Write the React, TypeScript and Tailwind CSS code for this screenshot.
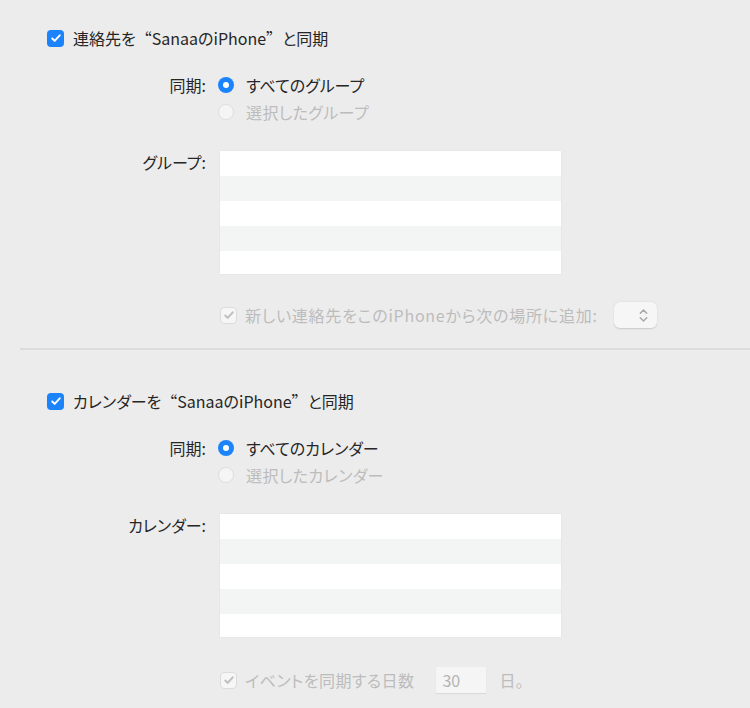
import { ReactNode } from 'react';

const font = "font-['Noto_Sans_CJK_JP','Noto_Sans',sans-serif] [font-feature-settings:'palt']";

function Q({ c }: { c: string }) {
  // full-width quotation marks, as in the reference
  return <span className="[font-feature-settings:'fwid']">{c}</span>;
}

function CheckMark({ color }: { color: string }) {
  return (
    <svg viewBox="0 0 16 16" className="h-[12px] w-[12px]">
      <path d="M3 8.6l3.2 3.2L13 4.4" fill="none" stroke={color} strokeWidth="2.6" strokeLinecap="round" strokeLinejoin="round" />
    </svg>
  );
}

function Checkbox({ disabled = false }: { disabled?: boolean }) {
  if (disabled) {
    return (
      <span className="flex h-[17px] w-[17px] shrink-0 items-center justify-center rounded-[4px] border border-[#dcdcdc] bg-[#f6f6f6]">
        <CheckMark color="#bdbdbd" />
      </span>
    );
  }
  return (
    <span className="flex h-[17px] w-[17px] shrink-0 items-center justify-center rounded-[4px] bg-[#1b83fc]">
      <CheckMark color="#ffffff" />
    </span>
  );
}

function Radio({ selected = false }: { selected?: boolean }) {
  if (selected) {
    return (
      <span className="flex h-[16px] w-[16px] shrink-0 items-center justify-center rounded-full bg-[#1b83fc]">
        <span className="h-[6px] w-[6px] rounded-full bg-white" />
      </span>
    );
  }
  return <span className="h-[16px] w-[16px] shrink-0 rounded-full border border-[#dedede] bg-[#f5f5f5]" />;
}

function Row({ label, children, className = '' }: { label?: string; children: ReactNode; className?: string }) {
  return (
    <div className={`flex ${className}`}>
      <div className="w-[206px] shrink-0 text-right text-[16px] leading-5 text-[#262626]">{label}</div>
      <div className="ml-[12px] flex flex-1 items-center">{children}</div>
    </div>
  );
}

function ListBox() {
  const rows = [0, 1, 2, 3, 4];
  return (
    <div className="ml-[2px] flex h-[123px] w-[341px] flex-col overflow-hidden shadow-[0_0_1px_rgba(0,0,0,0.12)]">
      {rows.map((i) => (
        <div key={i} className={`h-[25px] shrink-0 ${i % 2 === 0 ? 'bg-white' : 'bg-[#f3f4f4]'}`} />
      ))}
    </div>
  );
}

function SyncSection({
  title,
  all,
  selected,
  listLabel,
  footer,
  footerGap,
}: {
  title: ReactNode;
  all: string;
  selected: string;
  listLabel: string;
  footer: ReactNode;
  footerGap: string;
}) {
  return (
    <div className="flex flex-col">
      <div className="flex h-5 items-center gap-[9px] pl-[47px]">
        <Checkbox />
        <span className="text-[16px] leading-5 text-[#262626]">{title}</span>
      </div>

      <Row label="同期:" className="mt-[27px] h-5">
        <span className="flex items-center gap-[12px]">
          <Radio selected />
          <span className="text-[16px] leading-5 text-[#262626]">{all}</span>
        </span>
      </Row>
      <Row className="mt-[7px] h-5">
        <span className="flex items-center gap-[12px]">
          <Radio />
          <span className="text-[16px] leading-5 tracking-[0.4px] text-[#bcbcbc]">{selected}</span>
        </span>
      </Row>

      <div className="mt-[29px] flex">
        <div className="w-[206px] shrink-0 pt-[1px] text-right text-[16px] leading-5 text-[#262626]">{listLabel}</div>
        <div className="ml-[12px]">
          <ListBox />
        </div>
      </div>

      <div className={`flex h-[26px] items-center pl-[220px] ${footerGap}`}>{footer}</div>
    </div>
  );
}

export default function App() {
  return (
    <div className={`h-[708px] w-[750px] overflow-hidden bg-[#ececec] ${font}`}>
      <div className="pt-[28px]">
        <SyncSection
          title={<>連絡先を<Q c="“" />SanaaのiPhone<Q c="”" />と同期</>}
          all="すべてのグループ"
          selected="選択したグループ"
          listLabel="グループ:"
          footerGap="mt-[28px]"
          footer={
            <>
              <Checkbox disabled />
              <span className="ml-[8px] text-[16px] leading-5 tracking-[0.75px] text-[#bcbcbc]">新しい連絡先をこのiPhoneから次の場所に追加:</span>
              <div className="ml-[16px] flex h-[26px] w-[43px] items-center justify-end rounded-[6px] bg-[#f6f6f6] pr-[8px] shadow-[0_0.5px_1.5px_rgba(0,0,0,0.15)]">
                <svg viewBox="0 0 12 18" className="h-[17px] w-[11px]">
                  <path d="M2.5 6.5L6 3l3.5 3.5M2.5 11.5L6 15l3.5-3.5" fill="none" stroke="#a8a8a8" strokeWidth="1.6" strokeLinecap="round" strokeLinejoin="round" />
                </svg>
              </div>
            </>
          }
        />
      </div>

      <div className="mt-[20px] ml-[20px] h-[2px] bg-[#dcdcdc]" />

      <div className="pt-[41px]">
        <SyncSection
          title={<>カレンダーを<Q c="“" />SanaaのiPhone<Q c="”" />と同期</>}
          all="すべてのカレンダー"
          selected="選択したカレンダー"
          listLabel="カレンダー:"
          footerGap="mt-[30px]"
          footer={
            <>
              <Checkbox disabled />
              <span className="ml-[8px] text-[16px] leading-5 tracking-[0.45px] text-[#bcbcbc]">イベントを同期する日数</span>
              <div className="ml-[22px] flex h-[26px] w-[50px] items-center bg-[#f5f5f5] pl-[6px] text-[16px] text-[#b4b4b4] shadow-[0_1px_1px_rgba(0,0,0,0.08)]">
                30
              </div>
              <span className="ml-[13px] text-[16px] leading-5 text-[#bcbcbc]">日。</span>
            </>
          }
        />
      </div>
    </div>
  );
}
